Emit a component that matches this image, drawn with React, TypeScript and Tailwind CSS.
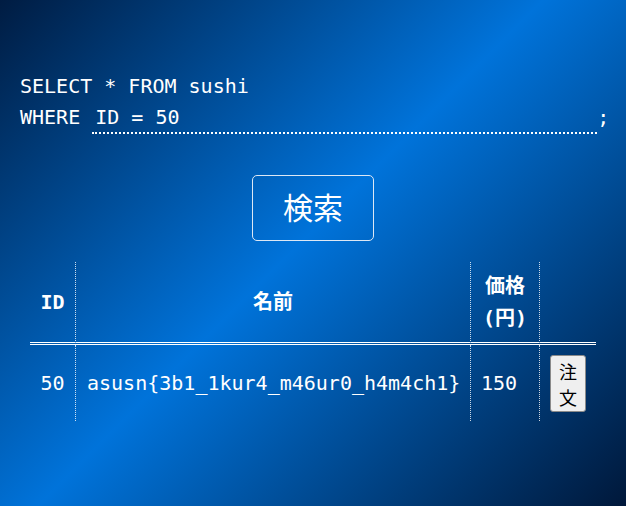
import React from "react";

const mono = "font-['DejaVu_Sans_Mono','Noto_Sans_CJK_JP',monospace]";
const headBase = "py-2 border-b-[3px] border-b-white [border-bottom-style:double]";
const vline = "border-l border-l-white/80 [border-left-style:dotted]";

export default function App() {
  return (
    <div
      className={`w-[626px] h-[506px] overflow-hidden bg-[linear-gradient(135deg,#001c42_0%,#0073da_48%,#00183a_100%)] text-white ${mono} text-[20px]`}
    >
      <div className="pt-[72px] pl-[20px]">
        <div className="leading-[28px] whitespace-pre">SELECT * FROM sushi</div>
        <div className="mt-[2px] flex items-baseline">
          <span className="leading-[28px] whitespace-pre">WHERE </span>
          <input
            readOnly
            value="ID = 50"
            className={`w-[505px] h-[32px] bg-transparent border-0 border-b-2 border-dotted border-white px-[3px] text-white outline-none ${mono} text-[20px]`}
          />
          <span className="leading-[28px]">;</span>
        </div>
      </div>

      <div className="mt-[41px] flex justify-center">
        <button className="w-[122px] h-[66px] pb-[4px] rounded-[5px] border border-[#dde8f5] bg-transparent text-white text-[30px] font-['Noto_Sans_CJK_JP',sans-serif] leading-none">
          検索
        </button>
      </div>

      <table className="mt-[21px] ml-[30px] w-[566px] border-separate border-spacing-0 table-fixed">
        <colgroup>
          <col className="w-[45px]" />
          <col className="w-[395px]" />
          <col className="w-[69px]" />
          <col className="w-[57px]" />
        </colgroup>
        <thead>
          <tr className="font-bold leading-[32px]">
            <th className={`${headBase} text-center`}>ID</th>
            <th className={`${headBase} ${vline} text-center`}>名前</th>
            <th className={`${headBase} ${vline} text-center`}>
              価格
              <br />
              (円)
            </th>
            <th className={`${headBase} ${vline}`}></th>
          </tr>
        </thead>
        <tbody>
          <tr className="leading-[28px]">
            <td className="text-center align-middle">50</td>
            <td className={`px-[11px] align-middle whitespace-nowrap ${vline}`}>
              asusn{"{"}3b1_1kur4_m46ur0_h4m4ch1{"}"}
            </td>
            <td className={`px-[10px] align-middle ${vline}`}>150</td>
            <td className={`pl-[10px] pt-[10px] pb-[9px] align-middle ${vline}`}>
              <button className="w-[36px] h-[57px] flex flex-col items-center justify-center rounded-[3px] border border-[#8a8a8a] bg-[#efefef] text-black text-[18px] leading-[26px] font-['Noto_Sans_CJK_JP',sans-serif]">
                <span>注</span>
                <span>文</span>
              </button>
            </td>
          </tr>
        </tbody>
      </table>
    </div>
  );
}
